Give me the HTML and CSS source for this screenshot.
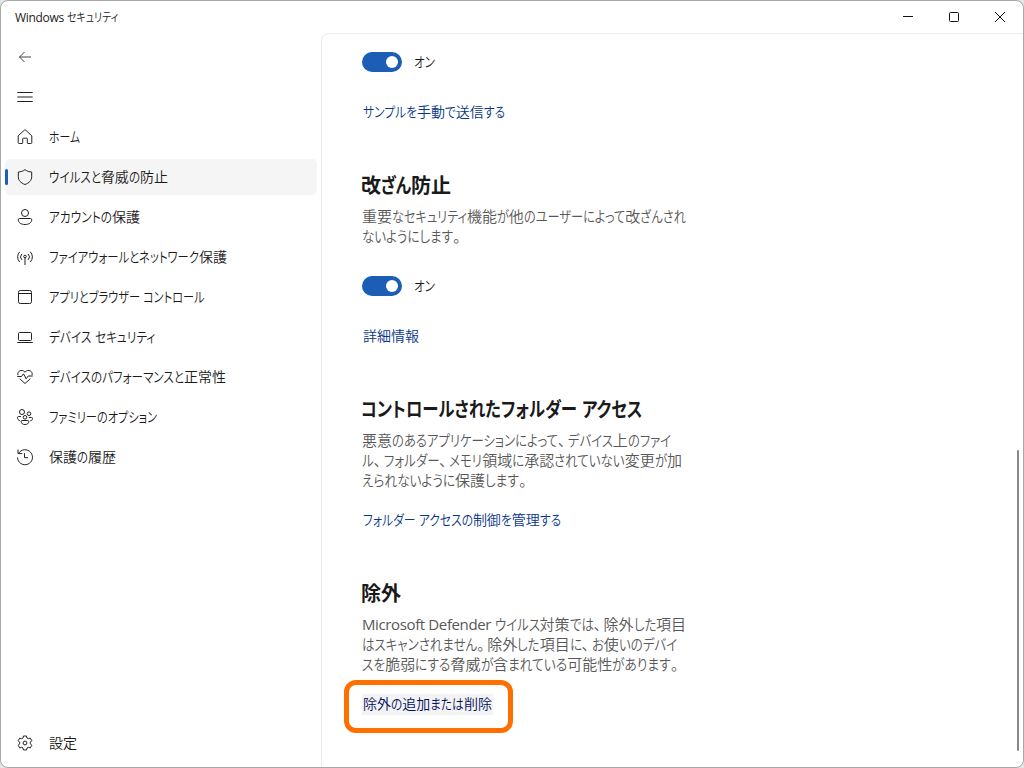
FILE: index.html
```html
<!DOCTYPE html>
<html lang="ja">
<head>
<meta charset="utf-8">
<title>Windows セキュリティ</title>
<link rel="stylesheet" href="styles.css">
</head>
<body>
<div class="window">
  <header class="titlebar">
    <span class="title" data-fit="103">Windows セキュリティ</span>
    <div class="controls">
      <svg class="ctl" viewBox="0 0 46 32"><path d="M18 15.5h10"/></svg>
      <svg class="ctl" viewBox="0 0 46 32"><rect x="18.5" y="11.5" width="9" height="9" rx="1"/></svg>
      <svg class="ctl" viewBox="0 0 46 32"><path d="M18 11l10 10M28 11l-10 10"/></svg>
    </div>
  </header>
  <div class="body">
    <nav class="sidebar">
      <a class="item"><svg class="icon" viewBox="0 0 16 16"><path stroke="#444" d="M7.5 3L2.5 8l5 5M2.5 8H14"/></svg></a>
      <a class="item"><svg class="icon" viewBox="0 0 16 16"><path d="M.3 3.5h15.4M.3 8h15.4M.3 12.5h15.4"/></svg></a>
      <a class="item"><svg class="icon" viewBox="0 0 16 16"><path d="M1.200 6.800L7.300 1.200q.7-.6 1.400 0l6.100 5.600v6.700q0 1-1 1H11q-.7 0-.7-.7V10q0-.8-.8-.8h-3q-.8 0-.8.8v3.800q0 .7-.7.7H2.200q-1 0-1-1z"/></svg><span data-fit="31">ホーム</span></a>
      <a class="item active"><svg class="icon" viewBox="0 0 16 16"><path d="M8 .6C6 2.300 3.800 2.900 1.300 3v4.700c0 3.700 2.500 6.300 6.700 7.800 4.200-1.500 6.700-4.100 6.700-7.800V3C12.200 2.900 10 2.300 8 .6z"/></svg><span data-fit="119">ウイルスと脅威の防止</span></a>
      <a class="item"><svg class="icon" viewBox="0 0 16 16"><circle cx="8" cy="4" r="3.500"/><path d="M2.500 9.500h11q1.200 0 1.200 1.200c0 3-2.700 4.800-6.700 4.800s-6.700-1.800-6.700-4.800q0-1.200 1.200-1.200z"/></svg><span data-fit="91">アカウントの保護</span></a>
      <a class="item"><svg class="icon" viewBox="0 0 16 16"><path d="M2.700 2.800a7.300 7.300 0 0 0 0 10.200M13.300 2.800a7.300 7.300 0 0 1 0 10.200M4.900 4.900a4.300 4.300 0 0 0 0 6M11.100 4.900a4.300 4.300 0 0 1 0 6M8 8.500V16"/><circle cx="8" cy="7.500" r="1.300"/></svg><span data-fit="178">ファイアウォールとネットワーク保護</span></a>
      <a class="item"><svg class="icon" viewBox="0 0 16 16"><rect x="1.500" y="1.500" width="13" height="13" rx="1.800"/><path d="M1.500 4.500h13"/></svg><span data-fit="156">アプリとブラウザー コントロール</span></a>
      <a class="item"><svg class="icon" viewBox="0 0 16 16"><rect x="1.500" y="3.500" width="13" height="8" rx="1"/><path d="M.2 13.500h15.600"/></svg><span data-fit="106">デバイス セキュリティ</span></a>
      <a class="item"><svg class="icon" viewBox="0 0 16 16"><path d="M1 6.200C-.3 2.500 4.700-.7 8 3.200c3.300-3.900 8.300-.7 7 3M.3 7.500h4.200l2-2.700 2.700 5 2-2.800h4.500M2.700 9.700L8 14.500l5.300-4.800"/></svg><span data-fit="177">デバイスのパフォーマンスと正常性</span></a>
      <a class="item"><svg class="icon" viewBox="0 0 16 16"><circle cx="5" cy="3" r="2.500"/><circle cx="12" cy="4.700" r="1.800"/><circle cx="8" cy="8.300" r="1.800"/><path d="M4 7.500H1.500q-1 0-1 1c0 1.700.8 2.700 2.300 3.200M11.800 8.500h2.700q1 0 1 1c0 1.400-.9 2.200-2.300 2.400M5.200 11.500h5.600q1 0 1 1c0 2-1.500 3-3.800 3s-3.800-1-3.800-3q0-1 1-1z"/></svg><span data-fit="108">ファミリーのオプション</span></a>
      <a class="item"><svg class="icon" viewBox="0 0 16 16"><path d="M1.500 4.500A7.500 7.500 0 1 1 .5 8.500M1 .6v4h4.300M7.500 4.200v4.500H11"/></svg><span data-fit="67">保護の履歴</span></a>
      <a class="item settings"><svg class="icon" viewBox="0 0 16 16"><circle cx="8" cy="8" r="1.900"/><path d="M6.500 1h3l.5 2 1.300.7 2-.6 1.500 2.600L13.400 7.200v1.600l1.400 1.500-1.500 2.600-2-.6L10 13l-.5 2h-3L6 13l-1.300-.7-2 .6-1.500-2.600 1.400-1.500V7.200L1.200 5.700l1.500-2.600 2 .6L6 3z"/></svg><span data-fit="28">設定</span></a>
    </nav>
    <main class="content">
      <section>
        <div class="toggle-row"><span class="toggle"></span><span data-fit="21">オン</span></div>
        <a class="link" data-fit="142">サンプルを手動で送信する</a>
      </section>
      <section>
        <h2 data-fit="90">改ざん防止</h2>
        <p><span data-fit="324">重要なセキュリティ機能が他のユーザーによって改ざんされ</span><br><span data-fit="101">ないようにします。</span></p>
        <div class="toggle-row"><span class="toggle"></span><span data-fit="21">オン</span></div>
        <a class="link" data-fit="57">詳細情報</a>
      </section>
      <section class="compact">
        <h2 data-fit="281">コントロールされたフォルダー アクセス</h2>
        <p><span data-fit="309">悪意のあるアプリケーションによって、デバイス上のファイ</span><br><span data-fit="320">ル、フォルダー、メモリ領域に承認されていない変更が加</span><br><span data-fit="167">えられないように保護します。</span></p>
        <a class="link" data-fit="198">フォルダー アクセスの制御を管理する</a>
      </section>
      <section class="compact">
        <h2 data-fit="40">除外</h2>
        <p><span data-fit="324">Microsoft Defender ウイルス対策では、除外した項目</span><br><span data-fit="315">はスキャンされません。除外した項目に、お使いのデバイ</span><br><span data-fit="319">スを脆弱にする脅威が含まれている可能性があります。</span></p>
        <a class="link focused"><span data-fit="129">除外の追加または削除</span></a>
      </section>
      <span class="scrollbar"></span>
    </main>
  </div>
</div>
<script src="fit.js"></script>
</body>
</html>
```
FILE: styles.css
```css
*, *::before, *::after { box-sizing: border-box; }
body {
  margin: 0;
  background: #e4e4e4;
  color: #1a1a1a;
  font: 350 14px/20px "Open Sans", "Noto Sans CJK JP", sans-serif;
  font-feature-settings: "palt";
}
.window {
  display: flex;
  flex-direction: column;
  width: 1024px;
  height: 768px;
  border: 1px solid #a8a8a8;
  border-radius: 8px;
  background: #fff;
  overflow: hidden;
}
.titlebar {
  display: flex;
  flex: none;
  justify-content: space-between;
  height: 32px;
  padding-left: 14px;
  font-size: 12px;
  line-height: 33px;
}
.controls { display: flex; }
.ctl { width: 46px; height: 32px; fill: none; stroke: #111; }
.body { display: flex; flex: 1; min-height: 0; }
.sidebar {
  display: flex;
  flex-direction: column;
  gap: 4px;
  width: 320px;
  padding: 6px 4px;
}
.item {
  display: flex;
  align-items: center;
  gap: 16px;
  height: 36px;
  padding-left: 12px;
  border-radius: 5px;
}
.active {
  padding-left: 0;
  background: #f5f5f5;
}
.active::before {
  content: "";
  width: 3px;
  height: 16px;
  margin-right: -7px;
  border-radius: 2px;
  background: #1c5db5;
}
.settings { margin-top: auto; }
.icon { flex: none; width: 16px; height: 16px; fill: none; stroke: #222; stroke-width: 1; overflow: visible; }
.content {
  position: relative;
  flex: 1;
  padding: 18px 0 0 40px;
  border: 1px solid #ececec;
  border-width: 1px 0 0 1px;
  border-radius: 8px 0 0 0;
}
section { margin-bottom: 49px; }
h2 {
  margin: 0 0 5px -1px;
  font-size: 20px;
  font-weight: 600;
  line-height: 30px;
}
p {
  margin: 0;
  color: #585858;
  font-size: 15px;
  line-height: 20px;
}
.toggle-row { display: flex; align-items: center; gap: 12px; }
.toggle {
  display: flex;
  align-items: center;
  justify-content: flex-end;
  width: 40px;
  height: 20px;
  padding-right: 4px;
  border-radius: 10px;
  background: #1c5db5;
}
.toggle::after {
  content: "";
  width: 12px;
  height: 12px;
  border-radius: 50%;
  background: #fff;
}
p + .toggle-row { margin-top: 30px; }
.link {
  display: block;
  width: fit-content;
  margin-top: 30px;
  padding-left: 1px;
  color: #06368a;
}
.compact .link { margin-top: 20px; }
.link.focused { position: relative; height: 21px; padding-right: 1px; background: #f3f3f3; color: #000f5c; }
.focused::after {
  content: "";
  position: absolute;
  left: -18px;
  top: -14px;
  width: 169px;
  height: 53px;
  border: 5px solid #ff6f00;
  border-radius: 12px;
}
.scrollbar {
  position: absolute;
  right: 4px;
  top: 416px;
  width: 2px;
  height: 301px;
  border-radius: 1px;
  background: #898989;
}
[data-fit] { white-space: nowrap; }
.kana {
  display: inline-block;
  transform-origin: 0 50%;
  vertical-align: top;
}
.mark {
  display: inline-block;
  width: 10px;
  vertical-align: top;
}
.latin { font-weight: 400; letter-spacing: -0.025em; }
```
FILE: fit.js
```js
// Condenses the kana runs of each line so that the line takes its data-fit width.
document.querySelectorAll('[data-fit]').forEach(function (line) {
  var parts = line.textContent.split(/([\u3040-\u30ff]+|[\u3001\u3002]|[A-Za-z ]+)/).filter(Boolean);
  line.textContent = '';
  var total = 0, kana = [];
  parts.forEach(function (text) {
    var s = document.createElement('span');
    s.textContent = text;
    s.style.whiteSpace = 'pre';
    var isKana = /[\u3040-\u30ff]/.test(text);
    if (isKana) s.className = 'kana';
    else if (/[\u3001\u3002]/.test(text)) s.className = 'mark';
    else if (/[A-Za-z ]/.test(text)) s.className = 'latin';
    line.appendChild(s);
    var w = s.getBoundingClientRect().width;
    if (isKana) kana.push({ el: s, w: w });
    else total += w;
  });
  var natural = kana.reduce(function (a, k) { return a + k.w; }, 0);
  if (!natural) return;
  var scale = (Number(line.dataset.fit) - total) / natural;
  kana.forEach(function (k) {
    k.el.style.width = k.w * scale + 'px';
    k.el.style.transform = 'scaleX(' + scale + ')';
  });
});
```
